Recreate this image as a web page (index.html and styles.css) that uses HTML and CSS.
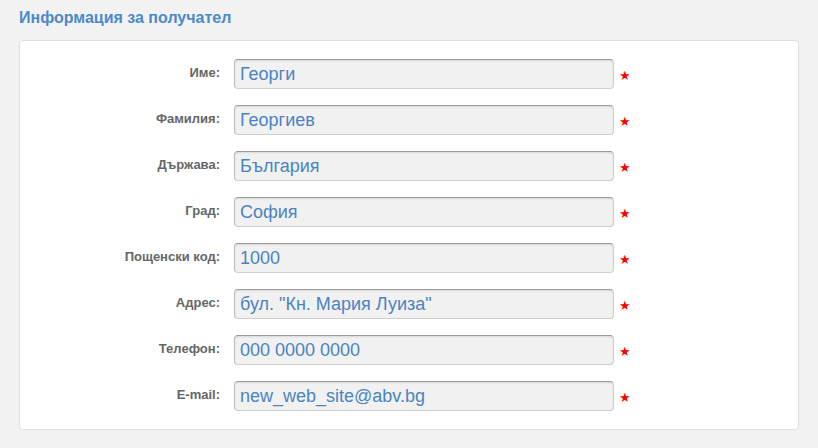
FILE: index.html
```html
<!DOCTYPE html>
<html lang="bg">
<head>
    <meta charset="UTF-8">
    <title>Информация за получател</title>
    <link rel="stylesheet" href="styles.css">
</head>
<body>
    <h2 class="section-title">Информация за получател</h2>
    <div class="card">
        <div class="row">
            <label class="label">Име:</label>
            <input class="field" type="text" value="Георги">
            <span class="req">★</span>
        </div>
        <div class="row">
            <label class="label">Фамилия:</label>
            <input class="field" type="text" value="Георгиев">
            <span class="req">★</span>
        </div>
        <div class="row">
            <label class="label">Държава:</label>
            <input class="field" type="text" value="България">
            <span class="req">★</span>
        </div>
        <div class="row">
            <label class="label">Град:</label>
            <input class="field" type="text" value="София">
            <span class="req">★</span>
        </div>
        <div class="row">
            <label class="label">Пощенски код:</label>
            <input class="field" type="text" value="1000">
            <span class="req">★</span>
        </div>
        <div class="row">
            <label class="label">Адрес:</label>
            <input class="field" type="text" value="бул. &quot;Кн. Мария Луиза&quot;">
            <span class="req">★</span>
        </div>
        <div class="row">
            <label class="label">Телефон:</label>
            <input class="field" type="text" value="000 0000 0000">
            <span class="req">★</span>
        </div>
        <div class="row">
            <label class="label">E-mail:</label>
            <input class="field" type="text" value="new_web_site@abv.bg">
            <span class="req">★</span>
        </div>
    </div>
</body>
</html>
```

FILE: styles.css
```css
body {
    margin: 0;
    padding: 0 19px;
    background-color: #f2f2f2;
    font-family: "Liberation Sans", Arial, sans-serif;
}

.section-title {
    margin: 0;
    padding: 8px 0 12px;
    font-size: 16px;
    line-height: 20px;
    font-weight: bold;
    color: #4a8acb;
}

.card {
    display: flex;
    flex-direction: column;
    gap: 16px;
    padding: 18px 0 18px;
    background-color: #fff;
    border: 1px solid #e0e0e0;
    border-radius: 4px;
}

.row {
    display: flex;
    align-items: center;
}

.label {
    width: 200px;
    margin-right: 14px;
    text-align: right;
    font-size: 13px;
    font-weight: bold;
    color: #666;
    position: relative;
    top: -2px;
}

.field {
    box-sizing: border-box;
    width: 380px;
    height: 30px;
    margin: 0;
    padding: 1px 5px 0;
    font-family: "Liberation Sans", Arial, sans-serif;
    font-size: 18px;
    color: #4a84c2;
    background-color: #f1f1f1;
    border: 1px solid #cfcfcf;
    border-top-color: #9a9a9a;
    border-left-color: #bcbcbc;
    border-radius: 4px;
    box-shadow: inset 0 1px 2px rgba(0, 0, 0, 0.1);
    outline: none;
}

.req {
    margin-left: 5px;
    font-size: 13px;
    color: #f00;
    position: relative;
    top: 1px;
}
```
